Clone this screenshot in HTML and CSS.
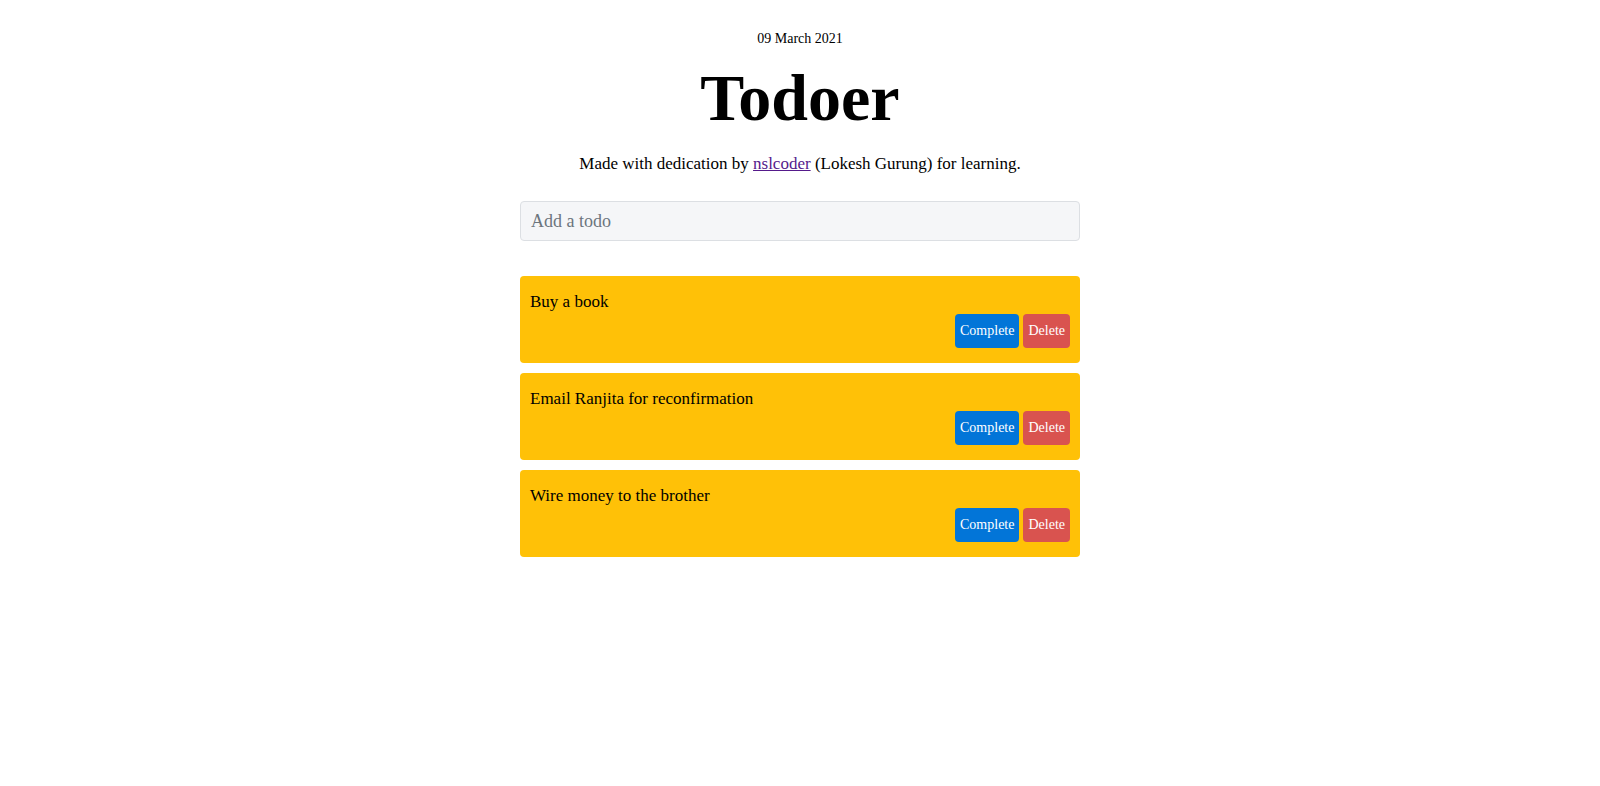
FILE: index.html
```html
<!DOCTYPE html>
<html lang="en">
<head>
<meta charset="utf-8">
<title>Todoer</title>
<link rel="stylesheet" href="styles.css">
</head>
<body>
<main class="app">
  <header class="header">
    <div class="date">09 March 2021</div>
    <h1 class="title">Todoer</h1>
    <p class="subtitle">Made with dedication by <a class="author" href="#">nslcoder</a> (Lokesh Gurung) for learning.</p>
  </header>
  <form class="add-form">
    <input class="add-input" type="text" placeholder="Add a todo">
  </form>
  <ul class="todo-list">
    <li class="todo">
      <p class="todo-text">Buy a book</p>
      <div class="todo-actions">
        <button class="btn btn-complete" type="button">Complete</button>
        <button class="btn btn-delete" type="button">Delete</button>
      </div>
    </li>
    <li class="todo">
      <p class="todo-text">Email Ranjita for reconfirmation</p>
      <div class="todo-actions">
        <button class="btn btn-complete" type="button">Complete</button>
        <button class="btn btn-delete" type="button">Delete</button>
      </div>
    </li>
    <li class="todo">
      <p class="todo-text">Wire money to the brother</p>
      <div class="todo-actions">
        <button class="btn btn-complete" type="button">Complete</button>
        <button class="btn btn-delete" type="button">Delete</button>
      </div>
    </li>
  </ul>
</main>
</body>
</html>
```

FILE: styles.css
```css
* {
  box-sizing: border-box;
}

body {
  margin: 0;
  background: #ffffff;
  color: #000000;
  font-family: "Liberation Serif", "Times New Roman", serif;
}

.app {
  width: 560px;
  margin: 0 auto;
  padding-top: 29px;
}

.header {
  text-align: center;
}

.date {
  font-size: 14px;
  line-height: 20px;
}

.title {
  margin: 12px 0 0;
  font-size: 66px;
  line-height: 74px;
  font-weight: 700;
}

.subtitle {
  margin: 15px 0 0;
  font-size: 17px;
  line-height: 27px;
}

.author {
  color: #551a8b;
  text-decoration: underline;
}

.add-form {
  margin: 24px 0 0;
}

.add-input {
  display: block;
  width: 100%;
  height: 40px;
  padding: 0 10px;
  border: 1px solid #dcdfe3;
  border-radius: 4px;
  background: #f5f6f8;
  font-family: inherit;
  font-size: 18px;
  color: #212529;
  outline: none;
}

.add-input::placeholder {
  color: #6c757d;
}

.todo-list {
  list-style: none;
  margin: 35px 0 0;
  padding: 0;
  display: flex;
  flex-direction: column;
  gap: 10px;
}

.todo {
  background: #ffc107;
  border-radius: 4px;
  padding: 13px 10px 15px;
  display: flex;
  flex-direction: column;
}

.todo-text {
  margin: 0;
  font-size: 17px;
  line-height: 25px;
}

.todo-actions {
  display: flex;
  justify-content: flex-end;
  gap: 4px;
}

.btn {
  height: 34px;
  padding: 0 5px;
  border: none;
  border-radius: 4px;
  color: #ffffff;
  font-family: inherit;
  font-size: 14px;
  cursor: pointer;
}

.btn-complete {
  background: #0275d8;
}

.btn-delete {
  background: #d9534f;
}
```
